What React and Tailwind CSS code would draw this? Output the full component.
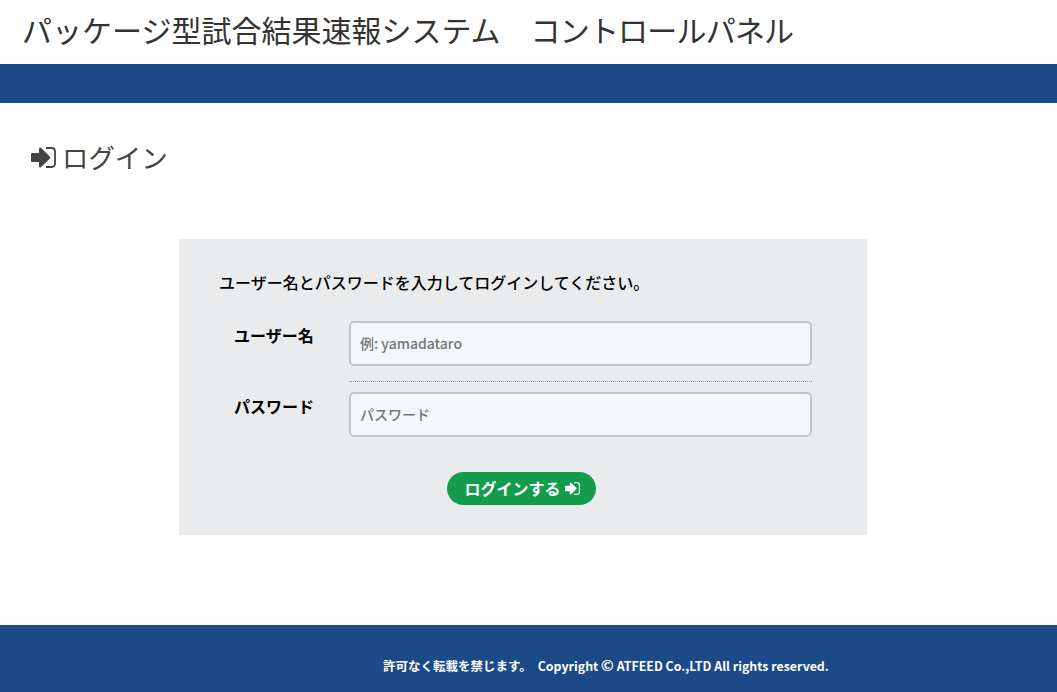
const LoginIcon = ({ className }) => (
  <svg viewBox="0 0 25 25" className={className} fill="currentColor">
    <path d="M1 8h7V4q0-1.400 1.200-1.400.6 0 1 .5l8.800 8.600q.8.900 0 1.800l-8.800 8.600q-.4.500-1 .5Q8 22.600 8 21.200V17H1q-1 0-1-1V9q0-1 1-1z" />
    <path d="M15 3h5.500q3.500 0 3.500 3.500v12q0 3.500-3.500 3.500H15" fill="none" stroke="currentColor" strokeWidth="1.800" />
  </svg>
)

const font = "font-['Noto_Sans_CJK_JP','Noto_Sans',sans-serif]"

export default function App() {
  return (
    <div className={`${font} min-h-[692px] flex flex-col bg-white`}>
      <header className="h-[64px] flex items-center pl-[22px]">
        <h1 className="text-[30px] leading-none -mt-[6px] text-[#333] font-normal whitespace-pre">
          パッケージ型試合結果速報システム　<span className="tracking-[-0.8px]">コントロールパネル</span>
        </h1>
      </header>
      <div className="h-[39px] bg-[#1b4a86]" />

      <main className="flex-1">
        <h2 className="mt-[34px] ml-[31px] flex items-center text-[26.4px] leading-[40px] font-normal text-[#444]">
          <LoginIcon className="w-[25px] h-[25px] mr-[6px]" />
          ログイン
        </h2>

        <div className="w-[688px] h-[296px] ml-[179px] mt-[62px] bg-[#eaebed] pt-[31px] px-[40px]">
          <p className="text-[16px] leading-[24px] font-medium text-black">ユーザー名とパスワードを入力してログインしてください。</p>

          <div className="mt-[27px] ml-[15px] w-[578px] flex flex-col">
            <div className="flex">
              <label className="w-[115px] pt-[2px] text-[16px] leading-[24px] font-bold text-black">ユーザー名</label>
              <div className="w-[463px] pb-[15px] border-b border-dotted border-[#999]">
                <input
                  placeholder="例: yamadataro"
                  className="w-full h-[45px] pl-[9px] pr-[10px] pb-[2px] bg-[#f4f7fa] border-2 border-[#c4c5c8] rounded-[5px] text-[14px] font-medium placeholder:text-[#757575]"
                />
              </div>
            </div>
            <div className="flex pt-[10px]">
              <label className="w-[115px] pt-[2px] text-[16px] leading-[24px] font-bold text-black">パスワード</label>
              <input
                type="password"
                placeholder="パスワード"
                className="w-[463px] h-[45px] pl-[9px] pr-[10px] pb-[2px] bg-[#f4f7fa] border-2 border-[#c4c5c8] rounded-[5px] text-[14px] font-medium placeholder:text-[#757575]"
              />
            </div>
          </div>

          <div className="mt-[35px] flex justify-center pr-[3px]">
            <button className="h-[33px] w-[149px] pb-[2px] pl-[1px] flex items-center justify-center gap-[4px] rounded-full bg-[#149c4c] text-white text-[16px] font-bold">
              ログインする
              <LoginIcon className="w-[15px] h-[15px] mt-[2px]" />
            </button>
          </div>
        </div>
      </main>

      <footer className="h-[67px] bg-[#1b4a86] flex items-center justify-center pl-[155px] pt-[15px] text-white text-[12.5px] font-bold">
        <p className="whitespace-pre">
          許可なく転載を禁じます。 <span className="ml-[3px] text-[12.4px]">Copyright </span><span className="text-[15px] leading-none">©</span><span className="text-[12.4px]"> ATFEED Co.,LTD All rights reserved.</span>
        </p>
      </footer>
    </div>
  )
}
